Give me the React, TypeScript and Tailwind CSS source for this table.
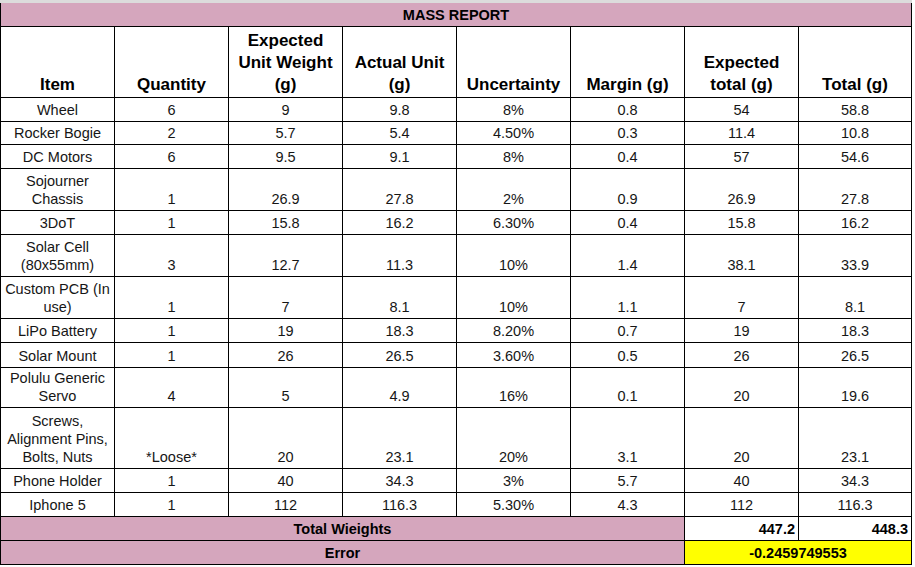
import React from "react";

const rows = [
  { h: "h-[24px]", c: ["Wheel", "6", "9", "9.8", "8%", "0.8", "54", "58.8"] },
  { h: "h-[23px]", c: ["Rocker Bogie", "2", "5.7", "5.4", "4.50%", "0.3", "11.4", "10.8"] },
  { h: "h-[24px]", c: ["DC Motors", "6", "9.5", "9.1", "8%", "0.4", "57", "54.6"] },
  { h: "h-[42px]", c: ["Sojourner Chassis", "1", "26.9", "27.8", "2%", "0.9", "26.9", "27.8"] },
  { h: "h-[24px]", c: ["3DoT", "1", "15.8", "16.2", "6.30%", "0.4", "15.8", "16.2"] },
  { h: "h-[42px]", c: ["Solar Cell (80x55mm)", "3", "12.7", "11.3", "10%", "1.4", "38.1", "33.9"] },
  { h: "h-[42px]", c: ["Custom PCB (In use)", "1", "7", "8.1", "10%", "1.1", "7", "8.1"] },
  { h: "h-[24px]", c: ["LiPo Battery", "1", "19", "18.3", "8.20%", "0.7", "19", "18.3"] },
  { h: "h-[25px]", c: ["Solar Mount", "1", "26", "26.5", "3.60%", "0.5", "26", "26.5"] },
  { h: "h-[40px]", c: ["Polulu Generic Servo", "4", "5", "4.9", "16%", "0.1", "20", "19.6"] },
  { h: "h-[61px]", c: ["Screws, Alignment Pins, Bolts, Nuts", "*Loose*", "20", "23.1", "20%", "3.1", "20", "23.1"] },
  { h: "h-[24px]", c: ["Phone Holder", "1", "40", "34.3", "3%", "5.7", "40", "34.3"] },
  { h: "h-[24px]", c: ["Iphone 5", "1", "112", "116.3", "5.30%", "4.3", "112", "116.3"] },
];

const headers = [
  "Item",
  "Quantity",
  "Expected Unit Weight (g)",
  "Actual Unit (g)",
  "Uncertainty",
  "Margin (g)",
  "Expected total (g)",
  "Total (g)",
];

function Cell({ children, last, bold }: { children: React.ReactNode; last?: boolean; bold?: boolean }) {
  return (
    <div
      className={
        "flex items-end justify-center text-center border-r border-black px-[3px] " +
        (last ? "w-[113px] " : "w-[114px] ") +
        (bold
          ? "font-bold text-[17px] leading-[22px] pb-[1px] text-black"
          : "text-[14.5px] leading-[18px] pb-[2px] text-[#161616]")
      }
    >
      <span>{children}</span>
    </div>
  );
}

export default function App() {
  return (
    <div className="w-[915px] h-[567px] bg-white font-['Liberation_Sans',Arial,sans-serif] overflow-hidden">
      <div className="h-[3px] w-[912px] bg-[#dcdcdc]" />
      <div className="w-[912px] flex flex-col border-l border-black">
        <div className="h-[24px] flex items-end justify-center border-b border-r border-black bg-[#d5a6bd] font-bold text-[14.5px] leading-[18px] pb-[2px] text-black">
          MASS REPORT
        </div>
        <div className="h-[71px] flex border-b border-black">
          {headers.map((t, i) => (
            <Cell key={t} bold last={i === 7}>
              {t}
            </Cell>
          ))}
        </div>
        {rows.map((r) => (
          <div key={r.c[0]} className={r.h + " flex border-b border-black"}>
            {r.c.map((v, i) => (
              <Cell key={i} last={i === 7}>
                {v}
              </Cell>
            ))}
          </div>
        ))}
        <div className="h-[24px] flex border-b border-black font-bold text-[14.5px] leading-[18px] text-black">
          <div className="w-[684px] flex items-end justify-center pb-[2px] bg-[#d5a6bd] border-r border-black">
            Total Wieights
          </div>
          <div className="w-[114px] flex items-end justify-end pr-[3px] pb-[2px] border-r border-black">
            447.2
          </div>
          <div className="w-[113px] flex items-end justify-end pr-[3px] pb-[2px] border-r border-black">
            448.3
          </div>
        </div>
        <div className="h-[24px] flex border-b border-black font-bold text-[14.5px] leading-[18px] text-black">
          <div className="w-[684px] flex items-end justify-center pb-[2px] bg-[#d5a6bd] border-r border-black">
            Error
          </div>
          <div className="w-[227px] flex items-end justify-center pb-[2px] bg-[#ffff00] border-r border-black">
            -0.2459749553
          </div>
        </div>
      </div>
    </div>
  );
}
